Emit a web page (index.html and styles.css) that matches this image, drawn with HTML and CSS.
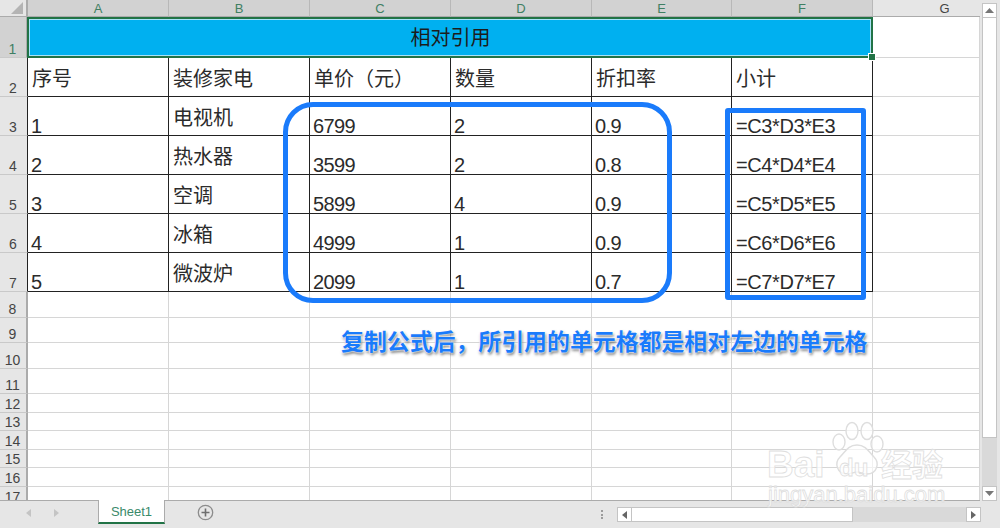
FILE: index.html
```html
<!DOCTYPE html>
<html lang="zh-CN">
<head>
<meta charset="utf-8">
<title>相对引用</title>
<link rel="stylesheet" href="styles.css">
</head>
<body>
<div class="page">
  <div class="top">
    <div class="sheet">
      <div class="ch corner"><svg class="corner-mark" width="12" height="12" viewBox="0 0 12 12"><path d="M12 0V12H0Z" fill="#b4b4b4"/></svg></div>
      <div class="ch on">A</div><div class="ch on">B</div><div class="ch on">C</div><div class="ch on">D</div><div class="ch on">E</div><div class="ch on">F</div><div class="ch last">G</div>

      <div class="rh on">1</div><div class="title">相对引用</div><div class="c"></div>

      <div class="rh dark">2</div><div class="t z">序号</div><div class="t z">装修家电</div><div class="t z">单价（元）</div><div class="t z">数量</div><div class="t z">折扣率</div><div class="t z">小计</div><div class="c"></div>
      <div class="rh dark">3</div><div class="t n">1</div><div class="t z">电视机</div><div class="t n">6799</div><div class="t n">2</div><div class="t n">0.9</div><div class="t n f">=C3*D3*E3</div><div class="c"></div>
      <div class="rh dark">4</div><div class="t n">2</div><div class="t z">热水器</div><div class="t n">3599</div><div class="t n">2</div><div class="t n">0.8</div><div class="t n f">=C4*D4*E4</div><div class="c"></div>
      <div class="rh dark">5</div><div class="t n">3</div><div class="t z">空调</div><div class="t n">5899</div><div class="t n">4</div><div class="t n">0.9</div><div class="t n f">=C5*D5*E5</div><div class="c"></div>
      <div class="rh dark">6</div><div class="t n">4</div><div class="t z">冰箱</div><div class="t n">4999</div><div class="t n">1</div><div class="t n">0.9</div><div class="t n f">=C6*D6*E6</div><div class="c"></div>
      <div class="rh dark">7</div><div class="t n">5</div><div class="t z">微波炉</div><div class="t n">2099</div><div class="t n">1</div><div class="t n">0.7</div><div class="t n f">=C7*D7*E7</div><div class="c"></div>

      <div class="rh">8</div><div class="c"></div><div class="c"></div><div class="c"></div><div class="c"></div><div class="c"></div><div class="c"></div><div class="c"></div>
      <div class="rh">9</div><div class="c"></div><div class="c"></div><div class="c"></div><div class="c"></div><div class="c"></div><div class="c"></div><div class="c"></div>
      <div class="rh">10</div><div class="c"></div><div class="c"></div><div class="c"></div><div class="c"></div><div class="c"></div><div class="c"></div><div class="c"></div>
      <div class="rh">11</div><div class="c"></div><div class="c"></div><div class="c"></div><div class="c"></div><div class="c"></div><div class="c"></div><div class="c"></div>
      <div class="rh">12</div><div class="c"></div><div class="c"></div><div class="c"></div><div class="c"></div><div class="c"></div><div class="c"></div><div class="c"></div>
      <div class="rh">13</div><div class="c"></div><div class="c"></div><div class="c"></div><div class="c"></div><div class="c"></div><div class="c"></div><div class="c"></div>
      <div class="rh">14</div><div class="c"></div><div class="c"></div><div class="c"></div><div class="c"></div><div class="c"></div><div class="c"></div><div class="c"></div>
      <div class="rh">15</div><div class="c"></div><div class="c"></div><div class="c"></div><div class="c"></div><div class="c"></div><div class="c"></div><div class="c"></div>
      <div class="rh">16</div><div class="c"></div><div class="c"></div><div class="c"></div><div class="c"></div><div class="c"></div><div class="c"></div><div class="c"></div>
      <div class="rh">17</div><div class="c"></div><div class="c"></div><div class="c"></div><div class="c"></div><div class="c"></div><div class="c"></div><div class="c"></div>
    </div>
    <div class="vscroll">
      <div class="sbtn"><svg width="9" height="5" viewBox="0 0 9 5"><path d="M4.5 0L9 5H0Z" fill="#777"/></svg></div>
      <div class="vthumb"></div>
      <div class="vtrack"></div>
      <div class="sbtn"><svg width="9" height="5" viewBox="0 0 9 5"><path d="M0 0H9L4.5 5Z" fill="#777"/></svg></div>
    </div>
  </div>
  <div class="bar">
    <div class="nav">
      <svg width="5" height="8" viewBox="0 0 5 8"><path d="M5 0V8L0 4Z" fill="#c4c4c4"/></svg>
      <svg width="5" height="8" viewBox="0 0 5 8"><path d="M0 0V8L5 4Z" fill="#c4c4c4"/></svg>
    </div>
    <div class="tab">Sheet1</div>
    <svg class="add" width="17" height="17" viewBox="0 0 17 17"><circle cx="8.5" cy="8.5" r="7.2" fill="none" stroke="#8c8c8c" stroke-width="1.3"/><path d="M8.5 4.5v8M4.5 8.5h8" stroke="#6e6e6e" stroke-width="1.6"/></svg>
    <div class="dots"><i></i><i></i><i></i></div>
    <div class="hscroll">
      <div class="hbtn"><svg width="5" height="8" viewBox="0 0 5 8"><path d="M5 0V8L0 4Z" fill="#666"/></svg></div>
      <div class="hthumb"></div>
      <div class="htrack"></div>
      <div class="hbtn"><svg width="5" height="8" viewBox="0 0 5 8"><path d="M0 0V8L5 4Z" fill="#666"/></svg></div>
    </div>
  </div>

  <div class="selection"><span class="handle"></span></div>
  <div class="mark mark-round"></div>
  <div class="mark mark-square"></div>
  <div class="callout">复制公式后，所引用的单元格都是相对左边的单元格</div>

  <div class="watermark">
    <svg class="paw" width="60" height="60" viewBox="0 0 60 60">
      <g fill="#fff" fill-opacity=".65" stroke="#dedede" stroke-width="1.4">
        <ellipse cx="12" cy="22" rx="6" ry="8"/>
        <ellipse cx="25" cy="11" rx="6" ry="8.5"/>
        <ellipse cx="40" cy="11" rx="6" ry="8.5"/>
        <ellipse cx="50" cy="24" rx="6" ry="8"/>
        <path d="M30 25c9 0 12 7 17 12 6 6 3 17-7 17-4 0-7-2-10-2s-6 2-10 2c-10 0-13-11-7-17 5-5 8-12 17-12Z"/>
      </g>
    </svg>
    <span class="wm-bai">Bai</span>
    <span class="wm-du">du</span>
    <span class="wm-jy">经验</span>
    <span class="wm-url">jingyan.baidu.com</span>
  </div>
</div>
</body>
</html>
```

FILE: styles.css
```css
* { box-sizing: border-box; }
html, body { margin: 0; padding: 0; }
body { background: #e6e6e6; font-family: "Liberation Sans", "Noto Sans CJK SC", sans-serif; overflow: hidden; }

.page { position: relative; width: 1000px; height: 528px; overflow: hidden; }
.top { display: flex; height: 501px; }

.sheet {
  width: 980px;
  height: 501px;
  overflow: hidden;
  background: #fff;
  border-bottom: 1px solid #ababab;
  display: grid;
  grid-template-columns: 28px 141px 141px 141px 141px 140px 141px 107px;
  grid-template-rows: 17px 41px 39px 39px 39px 39px 39px 39px 26px 25px 26px 25px 19px 18px 19px 18px 19px 19px;
}

.ch {
  background: #e6e6e6;
  border-right: 1px solid #c6c6c6;
  border-bottom: 1px solid #ababab;
  font-size: 13px;
  line-height: 17px;
  text-align: center;
  color: #444;
  overflow: hidden;
}
.ch.on { background: #d2d2d2; color: #3f7f63; border-right-color: #b8b8b8; }
.ch.last { padding-left: 36px; border-right: 0; }
.corner { position: relative; display: flex; align-items: flex-end; justify-content: flex-end; padding: 0 3px 2px 0; border-right: 2px solid #ababab; }
.corner-mark { display: block; }

.rh {
  background: #e6e6e6;
  border-right: 2px solid #ababab;
  border-bottom: 1px solid #c9c9c9;
  font-size: 14px;
  line-height: 15px;
  color: #444;
  text-align: center;
  display: flex;
  align-items: flex-end;
  justify-content: center;
  padding-right: 1px;
  overflow: hidden;
}
.rh.on { background: #d2d2d2; color: #3f7f63; }
.rh.dark { border-right: 1px solid #222; }

.c { border-right: 1px solid #d6d6d6; border-bottom: 1px solid #d6d6d6; }

.title {
  grid-column: span 6;
  background: #00b0f0;
  color: #1c1c1c;
  font-size: 20px;
  line-height: 40px;
  text-align: center;
  font-family: "Noto Sans CJK SC", sans-serif;
}

.t {
  border-right: 1px solid #222;
  border-bottom: 1px solid #222;
  display: flex;
  align-items: flex-end;
  padding-left: 4px;
  color: #2b2b2b;
  white-space: nowrap;
}
.z { font-family: "Noto Sans CJK SC", sans-serif; font-size: 20px; line-height: 28px; padding-bottom: 4px; }
.n { font-size: 20px; line-height: 18px; letter-spacing: -.6px; padding-left: 3px; }
.f { padding-left: 4px; letter-spacing: -.4px; }

.selection {
  position: absolute;
  left: 27px;
  top: 17px;
  width: 846px;
  height: 41px;
  border: 2px solid #217346;
  box-shadow: inset 0 0 0 1px #a9e2f7;
}
.handle {
  position: absolute;
  right: -4px;
  bottom: -4px;
  width: 6px;
  height: 6px;
  background: #217346;
  outline: 1px solid #fff;
}

.mark { position: absolute; border: 5px solid #1a7bfb; }
.mark-round { left: 283px; top: 102px; width: 389px; height: 201px; border-radius: 30px; }
.mark-square { left: 725px; top: 108px; width: 141px; height: 192px; border-radius: 3px; }

.callout {
  position: absolute;
  left: 341px;
  top: 325px;
  font-family: "Noto Sans CJK SC", sans-serif;
  font-size: 22.9px;
  line-height: 30px;
  font-weight: 700;
  color: #1a7bfb;
  white-space: nowrap;
  text-shadow: 0 0 2px #fff, 0 0 2px #fff, 1px 2px 3px rgba(0, 0, 0, .6);
}

.watermark { position: absolute; left: 760px; top: 420px; width: 200px; height: 90px; }
.paw { position: absolute; left: 67px; top: 0; }
.watermark span { position: absolute; white-space: nowrap; color: rgba(255, 255, 255, .75); -webkit-text-stroke: .8px #dedede; }
.wm-bai { left: 7px; top: 22px; font-size: 37px; line-height: 46px; font-weight: 700; }
.wm-du { left: 79px; top: 34px; font-size: 24px; line-height: 28px; font-weight: 700; }
.wm-jy { left: 121px; top: 24px; font-size: 31px; line-height: 38px; font-weight: 700; font-family: "Noto Sans CJK SC", sans-serif; }
.wm-url { left: 8px; top: 63px; font-size: 22px; line-height: 24px; }

.vscroll { width: 20px; padding: 3px 3px 0 2px; display: flex; flex-direction: column; }
.sbtn { height: 15px; flex: none; background: #fff; border: 1px solid #c4c4c4; display: flex; align-items: center; justify-content: center; }
.vthumb { height: 420px; flex: none; background: #fff; border: 1px solid #c4c4c4; border-top: 0; }
.vtrack { flex: 1; background: #d9d9d9; }

.bar { position: relative; height: 27px; display: flex; align-items: flex-start; }
.nav { width: 98px; height: 24px; display: flex; align-items: center; gap: 23px; padding-left: 26px; }
.nav svg { display: block; }
.tab {
  width: 67px;
  height: 24px;
  background: #fff;
  border-left: 1px solid #ababab;
  border-right: 1px solid #ababab;
  border-bottom: 2px solid #217346;
  margin-top: -1px;
  color: #3a8a6a;
  font-size: 13px;
  line-height: 23px;
  text-align: center;
}
.add { margin: 3px 0 0 32px; display: block; }
.dots { margin: 9px 0 0 387px; width: 3px; display: flex; flex-direction: column; gap: 1.5px; }
.dots i { display: block; width: 2px; height: 2px; background: #9c9c9c; }
.hscroll { margin: 6px 0 0 13px; width: 364px; height: 15px; display: flex; }
.hbtn { width: 15px; flex: none; background: #fff; border: 1px solid #c4c4c4; display: flex; align-items: center; justify-content: center; }
.hthumb { width: 221px; flex: none; background: #fff; border: 1px solid #c4c4c4; border-left: 0; }
.htrack { flex: 1; background: #d9d9d9; }
```
